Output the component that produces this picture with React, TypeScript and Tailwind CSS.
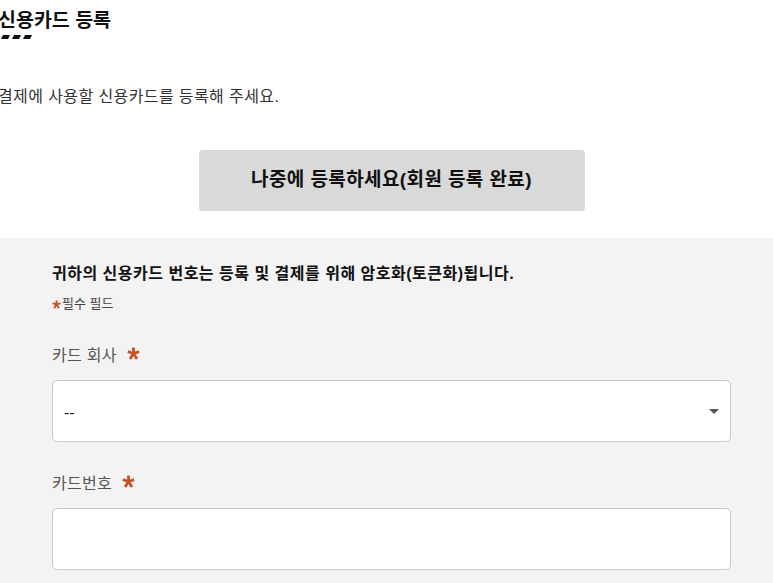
import React from 'react';

const font = { fontFamily: '"Liberation Sans", "Noto Sans CJK KR", sans-serif' };

// 주황색 별표 (필수 표시)
const Star = ({ size = 13 }: { size?: number }) => (
  <svg width={size} height={size} viewBox="0 0 12 12" className="shrink-0">
    <g stroke="#c4532a" strokeWidth="2.6" strokeLinecap="butt">
      <line x1="6" y1="0.5" x2="6" y2="6.5" />
      <line x1="6" y1="6" x2="0.8" y2="4.2" />
      <line x1="6" y1="6" x2="11.2" y2="4.2" />
      <line x1="6" y1="6" x2="2.8" y2="11" />
      <line x1="6" y1="6" x2="9.2" y2="11" />
    </g>
  </svg>
);

const App = () => {
  return (
    <div className="w-[773px] h-[583px] overflow-hidden bg-white text-[#222]" style={font}>
      {/* 헤더 */}
      <div className="pt-[7px] -ml-[2px]">
        <h1 className="text-[19.5px] font-semibold leading-[26px] text-[#111]">신용카드 등록</h1>
        <svg width="34" height="6" className="ml-[2px] mt-[1px]">
          <path d="M1 5 L3 1 L10 1 L8 5 Z M12 5 L14 1 L21 1 L19 5 Z M23 5 L25 1 L32 1 L30 5 Z" fill="#111" />
        </svg>
        <p className="mt-[46px] text-[16px] text-[#333] leading-[22px] tracking-[0.4px]">
          결제에 사용할 신용카드를 등록해 주세요.
        </p>
      </div>

      <div className="flex justify-center mt-[42px] pl-[10px]">
        <button className="w-[386px] h-[61px] rounded-[4px] bg-[#d9d9d9] text-[19px] font-bold text-[#111] tracking-[0.4px]">
          나중에 등록하세요(회원 등록 완료)
        </button>
      </div>

      {/* 폼 */}
      <div className="mt-[27px] bg-[#f3f3f3] pl-[52px] pr-[42px] pt-[25px] pb-10">
        <p className="text-[16px] font-bold text-[#111] leading-[22px] tracking-[0.5px]">
          귀하의 신용카드 번호는 등록 및 결제를 위해 암호화(토큰화)됩니다.
        </p>
        <p className="mt-[10px] flex items-center gap-[1px] text-[13px] text-[#444] leading-[18px]">
          <Star size={9} />
          필수 필드
        </p>

        <label className="mt-[31px] flex items-center gap-[10px] text-[16px] text-[#555] leading-[24px] tracking-[0.3px]">
          카드 회사 <span className="-mt-[6px]"><Star /></span>
        </label>
        <div className="mt-[12px] relative h-[62px] bg-white border border-[#c8c8c8] rounded-[5px] flex items-center pl-[11px]">
          <span className="text-[16px] text-[#222] mt-[4px]">--</span>
          <svg width="10" height="6" className="absolute right-[11px] top-[28px]">
            <path d="M0 0 L10 0 L5 5 Z" fill="#555" />
          </svg>
        </div>

        <label className="mt-[30px] flex items-center gap-[10px] text-[16px] text-[#555] leading-[24px] tracking-[0.3px]">
          카드번호 <span className="-mt-[6px]"><Star /></span>
        </label>
        <div className="mt-[12px] h-[62px] bg-white border border-[#c8c8c8] rounded-[5px]" />
      </div>
    </div>
  );
};

export default App;
